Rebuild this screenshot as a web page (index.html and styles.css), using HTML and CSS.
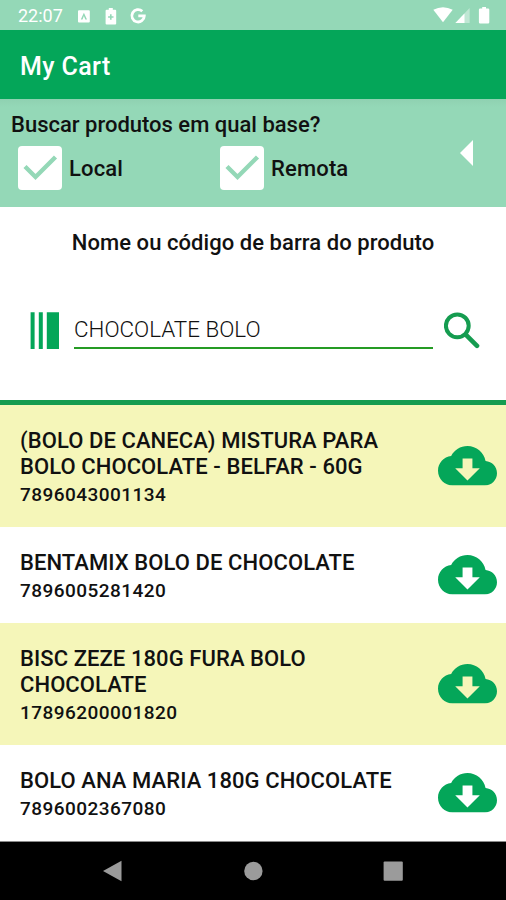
FILE: index.html
```
<!DOCTYPE html>
<html lang="pt-BR">
<head>
  <meta charset="UTF-8">
  <meta name="viewport" content="width=device-width, initial-scale=1">
  <title>My Cart</title>
  <link rel="stylesheet" href="styles.css">
</head>
<body>
  <svg width="0" height="0" class="defs">
    <symbol id="cloud" viewBox="0 4 24 16">
      <path d="M19.35 10.04C18.67 6.59 15.64 4 12 4 9.11 4 6.6 5.64 5.35 8.04 2.34 8.36 0 10.91 0 14c0 3.31 2.69 6 6 6h13c2.76 0 5-2.24 5-5 0-2.64-2.05-4.78-4.65-4.96zM17 13l-5 5-5-5h3V9h4v4h3z"/>
    </symbol>
    <symbol id="check" viewBox="0 0 44 44">
      <path d="M7 20.5 17.5 31 37.5 11" fill="none" stroke="#94d8b7" stroke-width="4.4"/>
    </symbol>
  </svg>

  <div class="screen">
    <div class="status-bar">
      <span class="clock">22:07</span>
      <svg class="status-left" width="70" height="20" viewBox="0 0 70 20">
        <path fill-rule="evenodd" d="M2 4.2h9.800q1 0 1 1v10.400q0 1-1 1H2q-1 0-1-1V5.200q0-1 1-1zM6.900 6.800 3.800 13.400h1.700l1.400-3.400 1.400 3.400h1.700z"/>
        <path fill-rule="evenodd" d="M31.800 2h4v1.800h2.400q1 0 1 1v12.600q0 1-1 1h-8.600q-1 0-1-1V4.800q0-1 1-1h2.200zM33 8.300v1.900h-1.900v1.600H33v1.900h1.600v-1.900h1.900v-1.600h-1.900V8.300z"/>
        <path d="M65.300 5.200A6.200 6.200 0 1 0 67.300 9.900H61.300" fill="none" stroke="#fff" stroke-width="2.800"/>
      </svg>
      <svg class="status-right" width="58" height="20" viewBox="0 0 58 20">
        <path d="M0.300 4.700Q10 -0.300 19.700 4.700L10 17.200z"/>
        <path d="M22.400 18 36.600 3v15z" opacity=".4"/>
        <path d="M22.400 18 31.500 8.500V18z"/>
        <path d="M49.200 1.900H53v1.700h2.100q1.200 0 1.200 1.200v12.400q0 1.200-1.200 1.200h-8q-1.200 0-1.200-1.200V4.800q0-1.200 1.200-1.200h2.100z"/>
      </svg>
    </div>

    <div class="app-bar">My Cart</div>

    <div class="filter">
      <div class="filter-main">
        <div class="filter-title">Buscar produtos em qual base?</div>
        <div class="options">
          <div class="option">
            <svg class="box"><use href="#check"/></svg>
            <span>Local</span>
          </div>
          <div class="option">
            <svg class="box"><use href="#check"/></svg>
            <span>Remota</span>
          </div>
        </div>
      </div>
      <div class="arrow"></div>
    </div>

    <div class="search">
      <div class="search-title">Nome ou código de barra do produto</div>
      <div class="search-row">
        <svg class="barcode" width="30" height="38" viewBox="0 0 30 38">
          <path d="M.6.200h4v36.800h-4zM8.800.200h4v36.800h-4zM16.800.200H29v36.800H16.800z"/>
        </svg>
        <div class="field">CHOCOLATE BOLO</div>
        <svg class="lupa" width="36" height="38" viewBox="0 0 36 38">
          <circle cx="13.300" cy="13.800" r="11.400"/>
          <path d="M22 22.800 33 33.800"/>
        </svg>
      </div>
    </div>

    <div class="list">
      <div class="item tall">
        <div class="info">
          <div class="name">(BOLO DE CANECA) MISTURA PARA<br>BOLO CHOCOLATE - BELFAR - 60G</div>
          <div class="code">7896043001134</div>
        </div>
        <svg class="cloud"><use href="#cloud"/></svg>
      </div>
      <div class="item">
        <div class="info">
          <div class="name">BENTAMIX BOLO DE CHOCOLATE</div>
          <div class="code">7896005281420</div>
        </div>
        <svg class="cloud"><use href="#cloud"/></svg>
      </div>
      <div class="item tall">
        <div class="info">
          <div class="name">BISC ZEZE 180G FURA BOLO<br>CHOCOLATE</div>
          <div class="code">17896200001820</div>
        </div>
        <svg class="cloud"><use href="#cloud"/></svg>
      </div>
      <div class="item">
        <div class="info">
          <div class="name">BOLO ANA MARIA 180G CHOCOLATE</div>
          <div class="code">7896002367080</div>
        </div>
        <svg class="cloud"><use href="#cloud"/></svg>
      </div>
    </div>

    <div class="nav-bar">
      <svg width="20" height="22" viewBox="0 0 20 22"><path d="M0 11 18.500 .700v20.600z"/></svg>
      <svg width="20" height="22" viewBox="0 0 20 22"><circle cx="10.400" cy="11" r="9.200"/></svg>
      <svg width="20" height="22" viewBox="0 0 20 22"><rect x=".6" y="1.500" width="19.200" height="19.200" rx="1"/></svg>
    </div>
  </div>
</body>
</html>
```

FILE: styles.css
```
* {
  box-sizing: border-box;
}

body {
  margin: 0;
  background-color: #fff;
  font-family: Roboto, "Liberation Sans", sans-serif;
  color: #111;
}

svg {
  display: block;
  flex-shrink: 0;
}

.defs {
  position: absolute;
}

.screen {
  width: 506px;
  height: 900px;
  display: flex;
  flex-direction: column;
  overflow: hidden;
}

.status-bar {
  height: 30px;
  display: flex;
  align-items: center;
  padding: 0 15px 0 18px;
  background-color: #94d8b7;
  color: #fff;
  fill: #fff;
}

.clock {
  width: 59px;
  font-size: 18px;
  line-height: 30px;
  padding-top: 2px;
}

.status-left {
  margin-top: 1px;
}

.status-right {
  margin-left: auto;
}

.app-bar {
  height: 69px;
  padding: 2px 20px 0;
  background-color: #04a659;
  color: #fff;
  font-size: 25px;
  font-weight: 500;
  letter-spacing: 0.4px;
  line-height: 69px;
}

.filter {
  height: 108px;
  display: flex;
  padding: 12px 33px 0 11px;
  background: linear-gradient(#8fd1b1, #94d8b7 8px);
  font-size: 22px;
  font-weight: 500;
}

.filter-main {
  flex: 1;
}

.filter-title {
  height: 35px;
  line-height: 28px;
}

.options {
  display: flex;
  padding-left: 7px;
}

.option {
  width: 202px;
  display: flex;
  align-items: center;
  gap: 7px;
  letter-spacing: 0.15px;
}

.box {
  width: 44px;
  height: 44px;
  background-color: #fff;
  border-radius: 4px;
}

.arrow {
  margin-top: 29px;
  width: 0;
  height: 0;
  border: solid transparent;
  border-width: 13px 13px 13px 0;
  border-right-color: #fff;
}

.search {
  height: 198px;
  padding-top: 22px;
  border-bottom: 5px solid #159c50;
}

.search-title {
  text-align: center;
  font-size: 22px;
  font-weight: 500;
  letter-spacing: 0.06px;
  line-height: 28px;
}

.search-row {
  display: flex;
  align-items: flex-start;
  padding: 55px 26px 0 30px;
}

.barcode {
  fill: #04a659;
}

.field {
  width: 359px;
  height: 37px;
  margin: 0 11px 0 14px;
  border-bottom: 2px solid #259b24;
  font-size: 22.4px;
  font-weight: 300;
  line-height: 35px;
}

.lupa {
  fill: none;
  stroke: #159c50;
  stroke-width: 4;
}

.lupa path {
  stroke-width: 4.6;
  stroke-linecap: round;
}

.item {
  height: 96px;
  display: flex;
  align-items: center;
  justify-content: space-between;
  padding: 0 9px 0 20px;
  background-color: #fff;
}

.item.tall {
  height: 122px;
  background-color: #f5f6b9;
}

.info {
  padding-top: 5px;
}

.name {
  font-size: 22px;
  font-weight: 500;
  line-height: 26px;
  letter-spacing: 0.08px;
  white-space: nowrap;
}

.code {
  padding-top: 1px;
  font-size: 19px;
  font-weight: 500;
  line-height: 28px;
  letter-spacing: 0.45px;
}

.cloud {
  width: 59px;
  height: 39.500px;
  fill: #04a659;
}

.nav-bar {
  flex: 1;
  display: flex;
  justify-content: space-between;
  padding: 18px 103px 0;
  background-color: #000;
  border-top: 1px solid #8a8a8a;
  fill: #9b9b9b;
}
```
